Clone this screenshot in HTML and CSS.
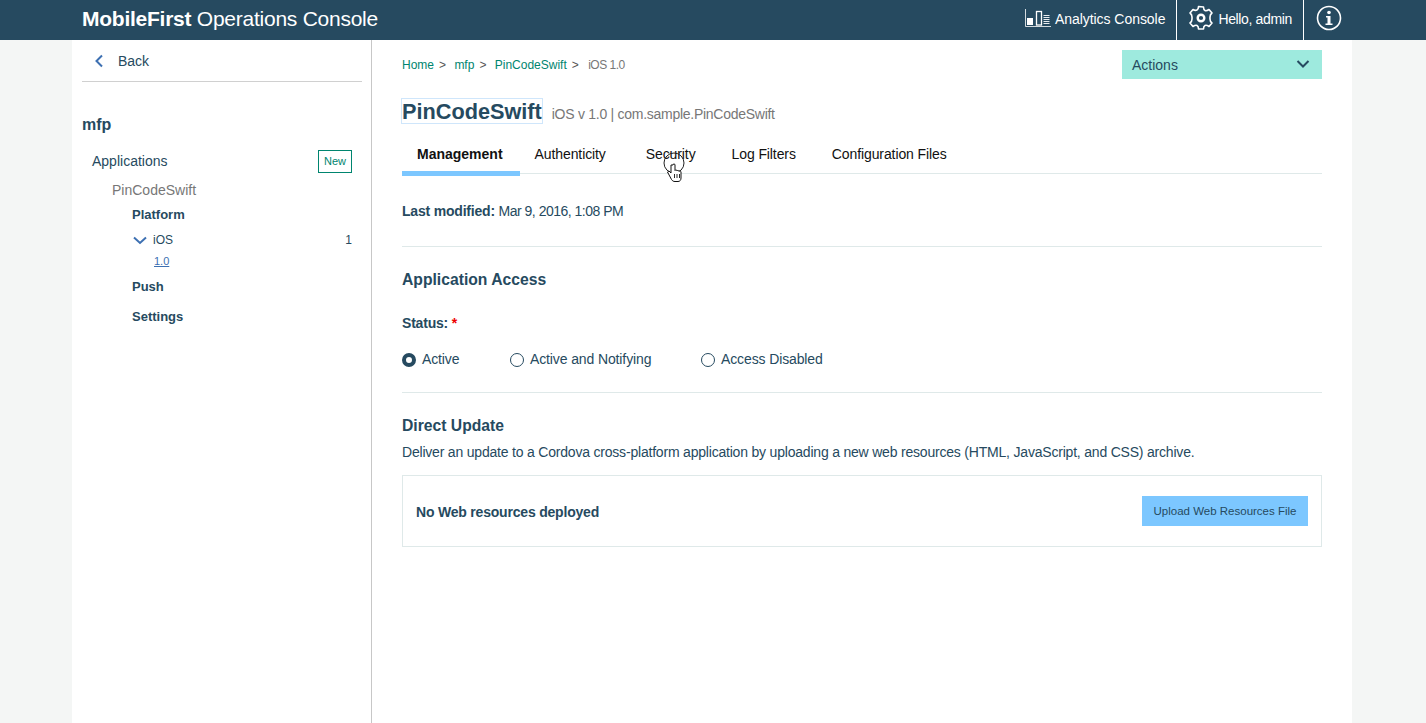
FILE: index.html
```html
<!DOCTYPE html>
<html lang="en">
<head>
    <meta charset="UTF-8">
    <title>MobileFirst Operations Console</title>
    <link rel="stylesheet" href="styles.css">
</head>
<body>
    <header class="topbar">
        <div class="brand"><b>MobileFirst</b> Operations Console</div>
        <div class="top-links">
            <a class="top-link analytics">
                <svg width="26" height="20" viewBox="0 0 26 20" fill="none">
                    <path d="M.5 1v17.500H26" stroke="#fff" stroke-width=".8"/>
                    <rect x="2" y="10" width="6" height="7" fill="#fff"/>
                    <rect x="11.500" y="3.500" width="5" height="13.500" stroke="#fff" stroke-width="1.300"/>
                    <path d="M18.500 7.500h6M18.500 9.500h6M18.500 11.500h6M18.500 13.500h6M18.500 15.500h6" stroke="#fff" stroke-width=".9"/>
                </svg>
                <span>Analytics Console</span>
            </a>
            <a class="top-link user">
                <svg width="26" height="26" viewBox="0 0 26 26" fill="none">
                    <path d="M10.500 1.500c0 2-.5 3-1.500 3.500S6.500 5.500 5 4.500L2 8c1.500 1 2 2.500 2 4v2c0 1.500-.5 3-2 4l3 3.500c1.500-1 3-1.500 4-1s1.500 1.500 1.500 3.500h5c0-2 .5-3 1.500-3.500s2.500 0 4 1L24 18c-1.500-1-2-2.500-2-4v-2c0-1.500.5-3 2-4l-3-3.500c-1.500 1-3 1.500-4 1s-1.500-1.500-1.500-3.500z" stroke="#fff" stroke-width="1.600" stroke-linejoin="round"/>
                    <circle cx="13" cy="13" r="3.300" stroke="#fff" stroke-width="2.400"/>
                </svg>
                <span>Hello, admin</span>
            </a>
            <a class="top-link info">
                <svg width="26" height="26" viewBox="0 0 26 26" fill="none">
                    <circle cx="13" cy="13" r="11.500" stroke="#fff" stroke-width="1.600"/>
                    <circle cx="13" cy="7.500" r="1.800" fill="#fff"/>
                    <path d="M10 11h4.500v7.500H16.500v1.500h-7v-1.500h2v-6H10z" fill="#fff"/>
                </svg>
            </a>
        </div>
    </header>

    <div class="page">
        <aside class="sidebar">
            <div class="back">
                <svg width="10" height="14" viewBox="0 0 10 14" fill="none"><path d="M8 1.500 2.500 7 8 12.500" stroke="#3d70b2" stroke-width="2"/></svg>
                <span>Back</span>
            </div>
            <h2 class="runtime">mfp</h2>
            <div class="apps-row">
                <span>Applications</span>
                <a class="new-btn">New</a>
            </div>
            <div class="app-name">PinCodeSwift</div>
            <ul class="app-tree">
                <li class="tree-head platform">Platform</li>
                <li class="ios-row">
                    <svg width="14" height="9" viewBox="0 0 14 9" fill="none"><path d="M1 1.500 7 7l6-5.500" stroke="#3d70b2" stroke-width="2"/></svg>
                    <span class="ios-name">iOS</span>
                    <span class="ios-count">1</span>
                </li>
                <li class="version"><a>1.0</a></li>
                <li class="tree-head push">Push</li>
                <li class="tree-head settings">Settings</li>
            </ul>
        </aside>

        <main class="content">
            <div class="content-top">
                <nav class="crumbs">
                    <a>Home</a><i>&gt;</i>
                    <a>mfp</a><i>&gt;</i>
                    <a>PinCodeSwift</a><i>&gt;</i>
                    <span>iOS 1.0</span>
                </nav>
                <div class="actions">
                    <span>Actions</span>
                    <svg width="14" height="9" viewBox="0 0 14 9" fill="none"><path d="M1.500 1 7 6.500 12.500 1" stroke="#264a60" stroke-width="2"/></svg>
                </div>
            </div>

            <div class="title-row">
                <h1 class="app-title">PinCodeSwift</h1>
                <span class="app-meta">iOS v 1.0 | com.sample.PinCodeSwift</span>
            </div>

            <ul class="tabs">
                <li class="tab active">Management</li>
                <li class="tab auth">Authenticity</li>
                <li class="tab">Security</li>
                <li class="tab">Log Filters</li>
                <li class="tab">Configuration Files</li>
            </ul>

            <p class="modified"><b>Last modified:</b> <span>Mar 9, 2016, 1:08 PM</span></p>

            <section class="block access">
                <h3>Application Access</h3>
                <div class="status-label"><b>Status:</b> <em>*</em></div>
                <div class="radios">
                    <label class="radio checked"><span class="dot"></span>Active</label>
                    <label class="radio"><span class="dot"></span>Active and Notifying</label>
                    <label class="radio"><span class="dot"></span>Access Disabled</label>
                </div>
            </section>

            <section class="block update">
                <h3>Direct Update</h3>
                <p>Deliver an update to a Cordova cross-platform application by uploading a new web resources (HTML, JavaScript, and CSS) archive.</p>
                <div class="upload-box">
                    <b>No Web resources deployed</b>
                    <button class="upload-btn">Upload Web Resources File</button>
                </div>
            </section>

            <!-- recorded mouse pointer over the Security tab -->
            <svg class="pointer" width="24" height="32" viewBox="0 0 24 32" fill="none">
                <circle cx="11" cy="11" r="10" stroke="#222" stroke-width="1"/>
                <path d="M8 13V21l-2-2-1.500 1 4 7.500c1 1.500 2 2 3.500 2h3c2 0 3-1.500 3-3.500v-6c0-1-1.500-1.500-2-.5 0-1.200-1.700-1.500-2-.5 0-1.200-1.700-1.500-2-.5V13c0-1.500-2-1.500-2 0z" fill="#fff" stroke="#111" stroke-width="1"/>
                <path d="M11.500 22v4M14 22v4M16.500 22v4" stroke="#111" stroke-width=".9"/>
            </svg>
        </main>
    </div>
</body>
</html>
```

FILE: styles.css
```css
* {
    box-sizing: border-box;
}
html, body {
    height: 100%;
}
body {
    margin: 0;
    background-color: #f4f6f5;
    color: #264a60;
    font-family: "Liberation Sans", Arial, sans-serif;
    font-size: 14px;
    overflow: hidden;
}
.topbar {
    height: 40px;
    background-color: #264a60;
    color: #fff;
    display: flex;
    justify-content: space-between;
    padding-left: 82px;
    padding-right: 84px;
}
.brand {
    font-size: 21px;
    line-height: 38px;
    letter-spacing: -0.25px;
}
.top-links {
    display: flex;
}
.top-link {
    display: flex;
    align-items: center;
    padding-bottom: 2px;
    gap: 4px;
}
.top-link svg {
    margin-bottom: 2px;
}
.analytics {
    padding-right: 11px;
    letter-spacing: -0.05px;
}
.user {
    border-left: 1px solid #fff;
    border-right: 1px solid #fff;
    padding: 0 11px 2px 11px;
    letter-spacing: -0.35px;
}
.info {
    padding-left: 12px;
}
.page {
    width: 1280px;
    height: 683px;
    margin-left: 72px;
    background-color: #fff;
    display: flex;
}
.sidebar {
    width: 300px;
    padding: 0 9px 0 10px;
    border-right: 1px solid #c7c7c7;
}
.back {
    height: 42px;
    border-bottom: 1px solid #d0d0d0;
    display: flex;
    align-items: center;
    padding-left: 12px;
    gap: 14px;
}
.runtime {
    margin: 34px 0 0;
    font-size: 16px;
    line-height: 18px;
}
.apps-row {
    display: flex;
    justify-content: space-between;
    align-items: center;
    margin-top: 16px;
    padding: 0 10px;
}
.apps-row span {
    padding-bottom: 2px;
}
.new-btn {
    width: 34px;
    height: 23px;
    border: 1px solid #00856f;
    color: #00856f;
    font-size: 11px;
    line-height: 21px;
    text-align: center;
}
.app-name {
    margin: 9px 0 0 30px;
    line-height: 17px;
    color: #777;
}
.app-tree {
    list-style: none;
    margin: 0;
    padding: 0 10px 0 50px;
    font-size: 13px;
}
.tree-head {
    font-weight: bold;
    line-height: 16px;
}
.platform {
    margin-top: 8px;
}
.ios-row {
    display: flex;
    align-items: center;
    margin-top: 9px;
    line-height: 16px;
    font-size: 12px;
}
.ios-row svg {
    margin-left: 1px;
}
.ios-name {
    margin-left: 6px;
}
.ios-count {
    margin-left: auto;
}
.version {
    margin: 6px 0 0 22px;
    font-size: 11px;
    line-height: 14px;
}
.version a {
    color: #3d70b2;
    text-decoration: underline;
}
.push {
    margin-top: 11px;
}
.settings {
    margin-top: 14px;
}
.content {
    position: relative;
    flex: 1;
    padding: 10px 30px 0;
    letter-spacing: -0.2px;
}
.content-top {
    display: flex;
    justify-content: space-between;
    align-items: flex-start;
}
.crumbs {
    margin-top: 8px;
    font-size: 12px;
    line-height: 14px;
    color: #777;
    letter-spacing: 0;
}
.crumbs a {
    color: #00856f;
}
.crumbs span {
    margin-left: 1px;
    letter-spacing: -0.5px;
}
.crumbs i {
    font-style: normal;
    color: #555;
    margin: 0 5px 0 5px;
}
.actions {
    width: 200px;
    height: 29px;
    background-color: #9eeade;
    display: flex;
    justify-content: space-between;
    align-items: center;
    padding: 0 12px 0 10px;
    letter-spacing: 0;
}
.title-row {
    display: flex;
    align-items: flex-end;
    margin-top: 19px;
}
.app-title {
    margin: 0 0 0 -1px;
    font-size: 21.7px;
    line-height: 25px;
    border: 1px solid #cfe6fb;
    height: 26px;
    letter-spacing: 0;
}
.app-meta {
    margin: 0 0 1px 9px;
    color: #777;
    line-height: 17px;
    letter-spacing: -0.27px;
}
.tabs {
    list-style: none;
    margin: 13px 0 0;
    padding: 0;
    height: 37px;
    display: flex;
    border-bottom: 1px solid #dfe9e9;
    color: #111;
    letter-spacing: -0.1px;
}
.tab {
    padding: 9px 18px 0;
}
.tab.active {
    font-weight: bold;
    height: 39px;
    padding: 9px 17px 0 15px;
    margin-right: -3px;
    border-bottom: 5px solid #7cc7ff;
    letter-spacing: 0;
}
.tab.auth {
    padding-right: 22px;
}
.modified {
    margin: 29px 0 0;
    line-height: 17px;
}
.modified span {
    letter-spacing: -0.5px;
}
.block {
    border-top: 1px solid #dfe9e9;
}
.block h3 {
    margin: 0;
    font-size: 15.7px;
    line-height: 20px;
    letter-spacing: 0;
}
.access {
    margin-top: 26px;
    padding-top: 23px;
    height: 146px;
}
.status-label {
    margin-top: 25px;
    line-height: 17px;
}
.status-label em {
    color: #e00;
    font-style: normal;
    font-weight: bold;
}
.radios {
    display: flex;
    margin-top: 19px;
    letter-spacing: -0.12px;
}
.radio {
    display: flex;
    align-items: center;
    line-height: 17px;
    gap: 6px;
}
.radio:first-child {
    width: 108px;
}
.radio:nth-child(2) {
    width: 191px;
}
.dot {
    width: 14px;
    height: 14px;
    border: 1px solid #264a60;
    border-radius: 50%;
}
.radio.checked .dot {
    border: 4.5px solid #264a60;
}
.update {
    padding-top: 23px;
}
.update p {
    margin: 8px 0 0;
    line-height: 17px;
}
.upload-box {
    margin-top: 14px;
    height: 72px;
    border: 1px solid #dfe9e9;
    display: flex;
    justify-content: space-between;
    align-items: center;
    padding: 0 13px 0 13px;
}
.upload-box b {
    padding-top: 2px;
}
.upload-btn {
    width: 166px;
    height: 30px;
    border: none;
    padding: 0;
    background-color: #7cc7ff;
    color: #264a60;
    font-family: inherit;
    font-size: 11.5px;
    letter-spacing: 0;
}
.pointer {
    position: absolute;
    left: 291px;
    top: 112px;
}
```
